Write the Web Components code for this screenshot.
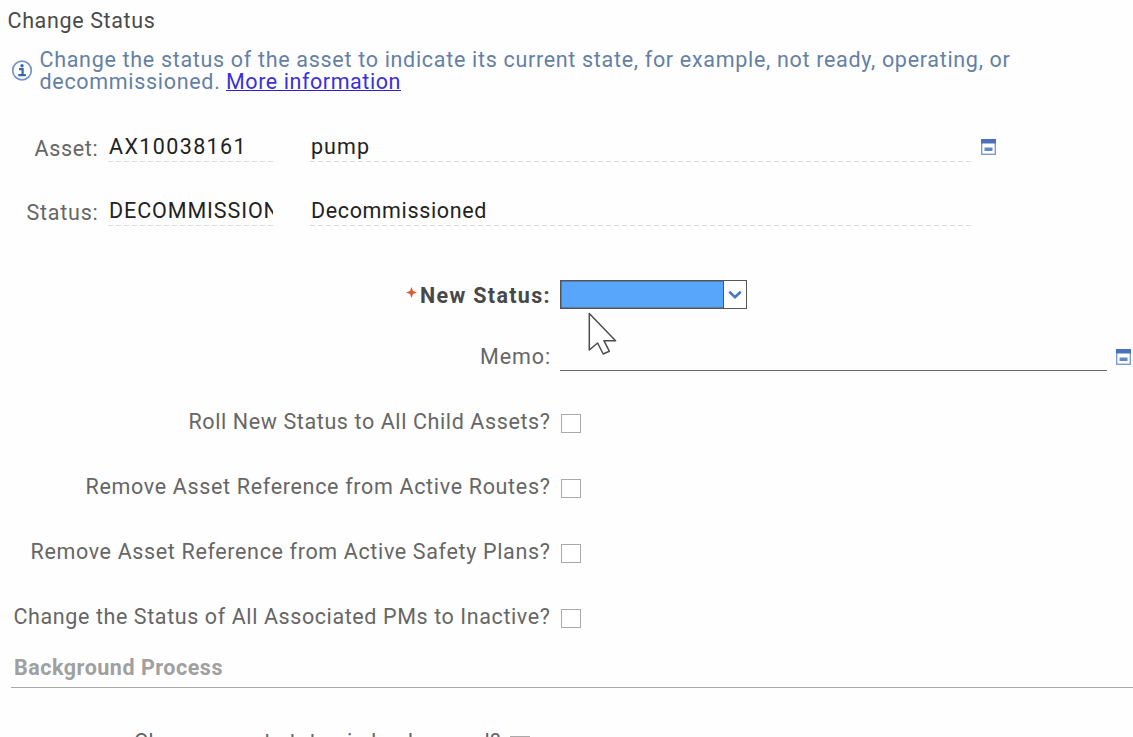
<!DOCTYPE html>
<html lang="en"><head><meta charset="utf-8"><title>Change Status</title>
<style>html,body{margin:0;height:100%;overflow:hidden;background:#fefefe}</style></head>
<body><status-dialog></status-dialog>
<script>
// Text run whose tracking is adjusted so that it takes up a given width.
class TextRun extends HTMLElement{
  connectedCallback(){
    const r=this.attachShadow({mode:'open'});
    r.innerHTML='<style>:host{display:inline-block;white-space:pre;line-height:var(--lh,26px);height:var(--lh,26px)}span{display:inline-block}</style><span><slot></slot></span>';
    const s=r.querySelector('span'),w=+this.getAttribute('w');
    if(w){const n=this.textContent.length;s.style.letterSpacing=((w-s.getBoundingClientRect().width)/n)+'px';}
  }
}
class InfoIcon extends HTMLElement{
  connectedCallback(){this.attachShadow({mode:'open'}).innerHTML=`<style>:host{display:block;width:22px;height:22px}svg{display:block}</style>
  <svg width="22" height="22" viewBox="0 0 22 22" fill="none"><circle cx="11" cy="10.5" r="9.3" stroke="#7592ca" stroke-width="1.7"/><path d="M8 9.2h3.600v5.600M7.300 15.200h7.500" stroke="#3564b0" stroke-width="2.200"/><circle cx="11" cy="5.800" r="1.700" fill="#3564b0"/></svg>`}
}
class DetailIcon extends HTMLElement{
  connectedCallback(){this.attachShadow({mode:'open'}).innerHTML=`<style>:host{display:block;width:15px;height:16px}svg{display:block}</style>
  <svg width="15" height="16"><rect x=".7" y=".7" width="13.6" height="14.6" fill="#fff" stroke="#7d9ad2" stroke-width="1.4"/><path d="M0 0h15v4.5H0z" fill="#4a70b7"/><path d="M3.5 8.500h8v3.500h-8z" fill="#6187c4"/></svg>`}
}
class CheckBox extends HTMLElement{
  connectedCallback(){this.attachShadow({mode:'open'}).innerHTML='<style>:host{display:block;box-sizing:border-box;width:20px;height:19px;border:1.5px solid #aaa;background:#fff}</style>'}
}
class DropDown extends HTMLElement{
  connectedCallback(){this.attachShadow({mode:'open'}).innerHTML=`<style>:host{display:grid;grid-template-columns:1fr 23px;box-sizing:border-box;width:187px;height:29px;border:1px solid #555;background:#57a6fb;box-shadow:inset 0 0 0 .5px #555}
  div{background:#fff;border-left:1.5px solid #555;display:grid;place-items:center}</style><span></span><div><svg width="14" height="10" fill="none"><path d="M1.3 1.800 7 7.200l5.700-5.400" stroke="#4c76c0" stroke-width="2.700"/></svg></div>`}
}
class MousePointer extends HTMLElement{
  connectedCallback(){this.attachShadow({mode:'open'}).innerHTML=`<style>:host{display:block;width:30px;height:44px}svg{display:block}</style>
  <svg width="30" height="44"><path d="M1.300 1.500v36.500l8.300-7 5.600 11 6.100-2.800-5.400-10.500h11.700z" fill="#fff" stroke="#4c4c4c" stroke-width="1.500" stroke-linejoin="round"/></svg>`}
}
// Label and box on one line; labels end at a shared right edge.
class CheckRow extends HTMLElement{
  connectedCallback(){
    this.attachShadow({mode:'open'}).innerHTML=`<style>:host{display:grid;grid-template-columns:var(--label,550.5px) 20px;column-gap:10.5px;height:65px;align-items:start}
    text-run{justify-self:end}check-box{margin-top:var(--drop,5px)}</style><text-run w="${this.getAttribute('w')}">${this.getAttribute('label')}</text-run><check-box></check-box>`}
}
class FieldValue extends HTMLElement{
  connectedCallback(){this.attachShadow({mode:'open'}).innerHTML=`<style>:host{display:block;box-sizing:border-box;height:36px;overflow:hidden;color:#222;padding-left:1px;white-space:nowrap;
  background:repeating-linear-gradient(90deg,#dcdcdc 0 5px,transparent 5px 8px) left bottom/100% 1px no-repeat}</style><slot></slot>`}
}
class StatusDialog extends HTMLElement{
  connectedCallback(){this.attachShadow({mode:'open'}).innerHTML=`<style>
  :host{display:block;position:relative;box-sizing:border-box;width:1133px;height:737px;overflow:hidden;font:21.500px Roboto,sans-serif;color:#666}
  header{padding:8px 0 0 7.500px;height:38px;box-sizing:border-box;color:#4a4a4a}
  .info{display:grid;grid-template-columns:28.500px 1fr;padding:9px 0 0 11px;height:88px;box-sizing:border-box;color:#6580a5}
  .info info-icon{margin-top:13px}
  .lines{display:grid;grid-auto-rows:22px;--lh:22px;padding-top:2px;align-content:start}
  .second{display:flex;gap:5.500px}
  a{display:flex;box-sizing:border-box;color:#3a30dc;text-decoration:none;height:20px;border-bottom:1.500px solid #2a20d8}
  .field{display:grid;grid-template-columns:98.500px 165px 663px 15px;height:64px}
  .field>text-run{justify-self:end;margin-top:10px}
  .field>field-value:nth-child(2){margin-left:9.500px;width:165px}
  .field>field-value:nth-child(3){margin-left:46.500px;width:663px}
  .field>detail-icon{margin-left:54.500px;margin-top:13px}
  .new{display:flex;padding:26px 0 0 406px;height:68px;box-sizing:border-box;font-weight:700;color:#484848}
  .new svg{margin:7px 3px 0 0;flex:none}
  .new text-run{margin-top:3px;width:131px;margin-right:8.500px}
  .memo{display:grid;grid-template-columns:551px 547px 15px;height:87px}
  .memo text-run{justify-self:end;margin-top:22px}
  .memo i{margin-left:9px;width:547px;height:49px;border-bottom:1.500px solid #666;box-sizing:border-box}
  .memo detail-icon{margin:27px 0 0 18px}
  h2{margin:0 0 0 11px;padding:1px 0 0 3px;height:34px;box-sizing:border-box;border-bottom:1.500px solid #aaa;font-size:21.500px;font-weight:700;color:#a0a0a0;line-height:26px}
  .last{--label:501px;--drop:7px;margin-top:41px;column-gap:9px}
  mouse-pointer{position:absolute;left:588px;top:312px}
  </style>
  <header><text-run w="148">Change Status</text-run></header>
  <section class="info"><info-icon></info-icon><div class="lines"><text-run w="971">Change the status of the asset to indicate its current state, for example, not ready, operating, or</text-run>
  <div class="second"><text-run w="181">decommissioned.</text-run><a href="#"><text-run w="175">More information</text-run></a></div></div></section>
  <div class="field"><text-run w="64">Asset:</text-run><field-value><div style="padding-top:8px"><text-run w="138">AX10038161</text-run></div></field-value><field-value><div style="padding-top:8px"><text-run w="59">pump</text-run></div></field-value><detail-icon></detail-icon></div>
  <div class="field"><text-run w="72">Status:</text-run><field-value><div style="padding-top:8px"><text-run w="199">DECOMMISSIONED</text-run></div></field-value><field-value><div style="padding-top:8px"><text-run w="176">Decommissioned</text-run></div></field-value></div>
  <div class="new"><svg width="11" height="11"><path d="M5.500 0 7 4l4 1.500L7 7 5.500 11 4 7 0 5.500 4 4z" fill="#d95b36"/></svg><text-run w="131">New Status:</text-run><drop-down></drop-down></div>
  <div class="memo"><text-run w="71">Memo:</text-run><i></i><detail-icon></detail-icon></div>
  <check-row w="362" label="Roll New Status to All Child Assets?"></check-row>
  <check-row w="465" label="Remove Asset Reference from Active Routes?"></check-row>
  <check-row w="520" label="Remove Asset Reference from Active Safety Plans?"></check-row>
  <check-row w="537" label="Change the Status of All Associated PMs to Inactive?" style="height:50px"></check-row>
  <h2><text-run w="209">Background Process</text-run></h2>
  <check-row class="last" w="367" label="Change asset status in background?"></check-row>
  <mouse-pointer></mouse-pointer>`}
}
for(const [n,c] of [['text-run',TextRun],['info-icon',InfoIcon],['detail-icon',DetailIcon],['check-box',CheckBox],['drop-down',DropDown],['mouse-pointer',MousePointer],['check-row',CheckRow],['field-value',FieldValue],['status-dialog',StatusDialog]])customElements.define(n,c);
</script></body></html>
